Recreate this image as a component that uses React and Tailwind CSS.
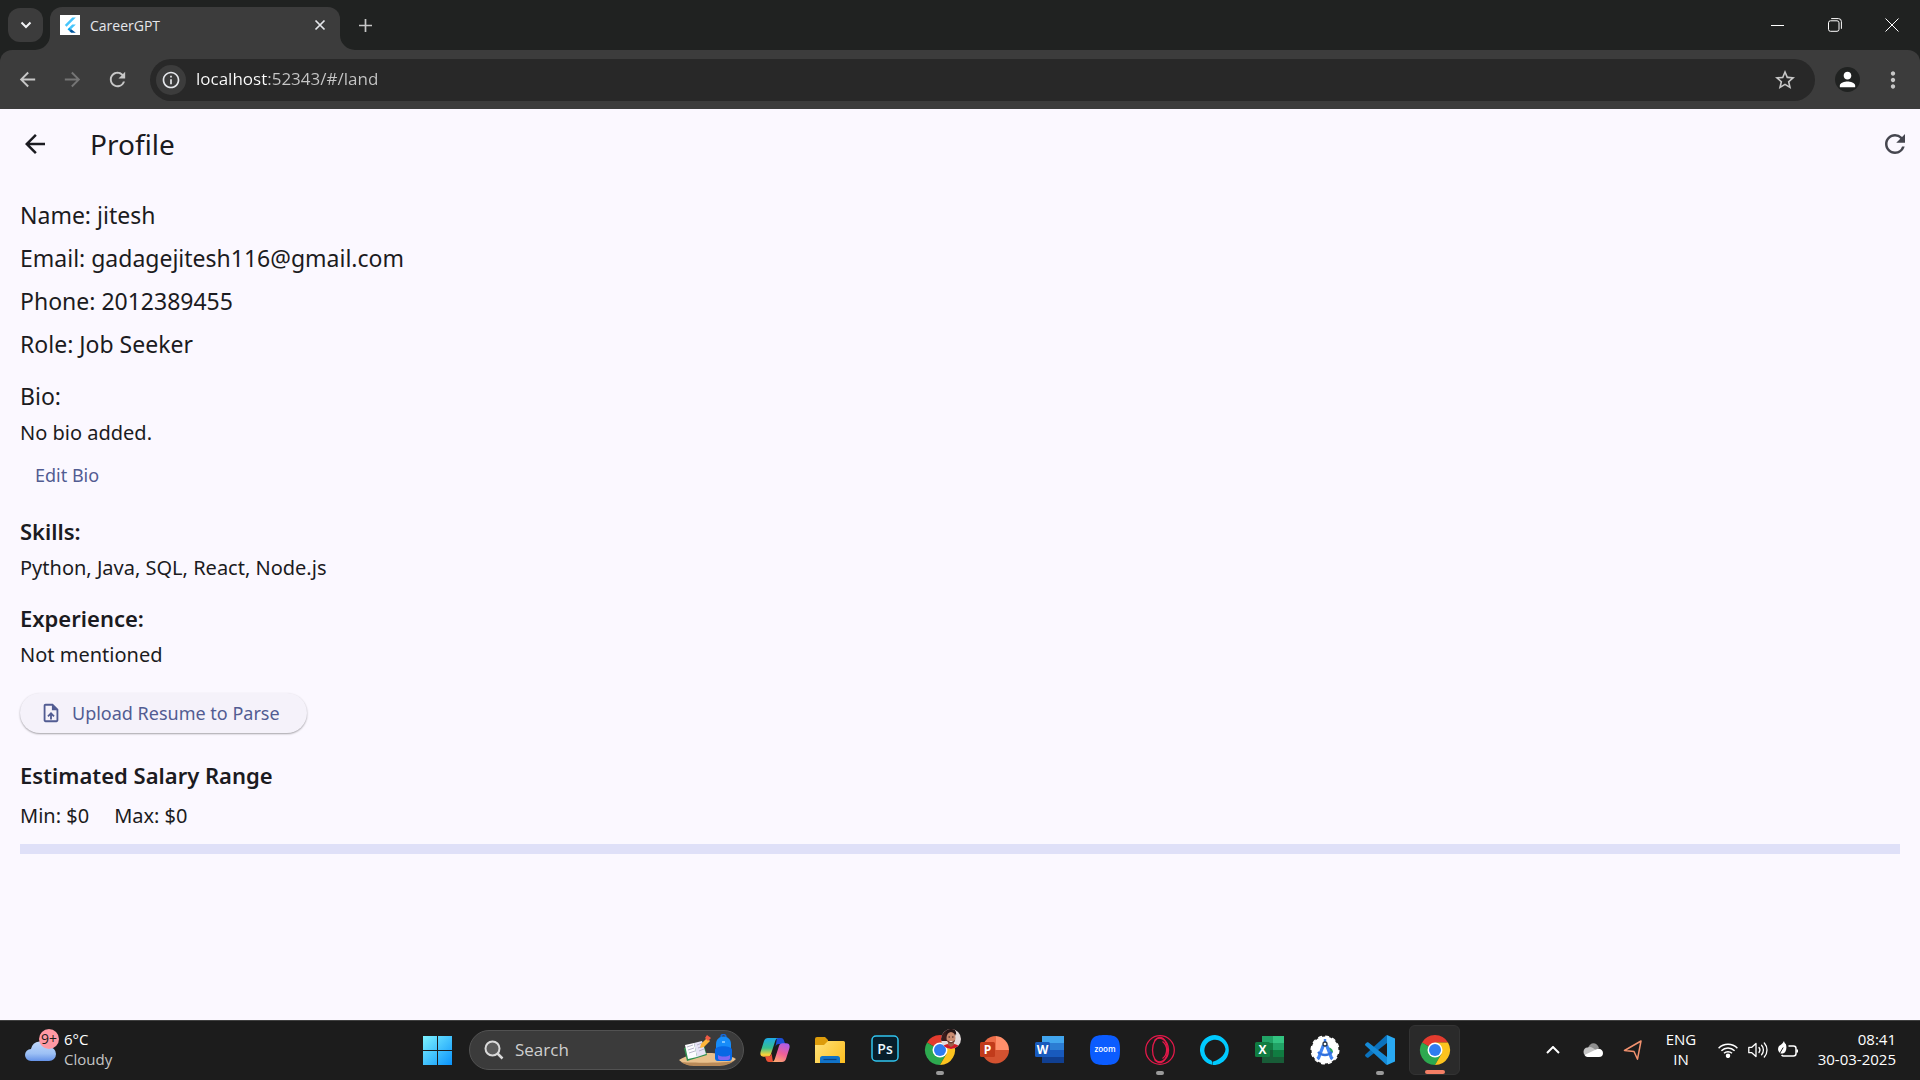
import { useState } from 'react';
import {
  MdArrowBack,
  MdArrowForward,
  MdInfoOutline,
  MdMoreVert,
  MdOutlineUploadFile,
  MdPerson,
  MdRefresh,
  MdStarBorder,
} from 'react-icons/md';

const profile = {
  name: 'jitesh',
  email: 'gadagejitesh116@gmail.com',
  phone: '2012389455',
  role: 'Job Seeker',
  bio: '',
  skills: ['Python', 'Java', 'SQL', 'React', 'Node.js'],
  experience: '',
  salary: { min: 0, max: 0, percent: 0 },
};

function FlutterIcon() {
  return (
    <svg viewBox="0 0 20 20" className="size-5 shrink-0 bg-white" aria-hidden="true">
      <path d="M12.3 2.5h3.5L6.6 11.8 4.8 10z" fill="#47c5fb" />
      <path d="M12.2 9.6h3.6L11 14.3 9.2 12.5z" fill="#47c5fb" />
      <path d="M7.5 14.2l1.8-1.8 1.9 1.9-1.8 1.8z" fill="#00a4f0" />
      <path d="M9.4 16.1l1.8-1.8 4.6 3.4h-4.7z" fill="#00569e" />
    </svg>
  );
}

function TitleBar() {
  return (
    <div className="flex h-[50px] items-start bg-[#202221]">
      <button aria-label="Search tabs" className="mt-2 ml-2 flex h-[34px] w-[35px] items-center justify-center rounded-xl bg-[#3c3c3c] text-gray-100">
        <svg viewBox="0 0 12 8" className="h-2 w-3" fill="none" stroke="currentColor" strokeWidth="2">
          <path d="M1.5 1.5L6 6l4.5-4.5" />
        </svg>
      </button>

      <div className="relative mt-[7px] ml-[7px] flex h-[43px] w-[290px] items-center rounded-t-xl bg-[#3c3c3c] pr-2 pb-[7px] pl-[10px]">
        <FlutterIcon />
        <span className="ml-[10px] flex-1 text-[14px] text-gray-200">CareerGPT</span>
        <button aria-label="Close tab" className="flex size-6 items-center justify-center text-gray-200">
          <svg viewBox="0 0 12 12" className="size-3" stroke="currentColor" strokeWidth="1.7">
            <path d="M1.5 1.5l9 9M10.5 1.5l-9 9" />
          </svg>
        </button>
        {/* flared corners under the tab */}
        <svg viewBox="0 0 15 15" className="absolute bottom-0 -left-[15px] size-[15px]" fill="#3c3c3c">
          <path d="M15 0v15H0A15 15 0 0 0 15 0z" />
        </svg>
        <svg viewBox="0 0 15 15" className="absolute -right-[15px] bottom-0 size-[15px]" fill="#3c3c3c">
          <path d="M0 0v15h15A15 15 0 0 1 0 0z" />
        </svg>
      </div>

      <button aria-label="New tab" className="ml-[9px] flex h-[50px] w-8 items-center justify-center text-[#c7c7c7]">
        <svg viewBox="0 0 13 13" className="size-[13px]" stroke="currentColor" strokeWidth="1.7">
          <path d="M6.5 0v13M0 6.5h13" />
        </svg>
      </button>

      <div className="ml-auto flex h-[50px] text-white">
        <button aria-label="Minimize" className="flex w-[57px] items-center justify-center">
          <svg viewBox="0 0 13 13" className="size-[13px]" stroke="currentColor">
            <path d="M0 6.5h13" />
          </svg>
        </button>
        <button aria-label="Restore" className="flex w-[57px] items-center justify-center">
          <svg viewBox="0 0 14 14" className="size-[14px]" fill="none" stroke="currentColor">
            <rect x="0.5" y="2.8" width="10.5" height="10.5" rx="2" />
            <path d="M3.2 0.6h7.2a3 3 0 0 1 3 3v7.2" />
          </svg>
        </button>
        <button aria-label="Close" className="flex w-[57px] items-center justify-center">
          <svg viewBox="0 0 14 14" className="size-[14px]" stroke="currentColor">
            <path d="M0.5 0.5l13 13M13.5 0.5l-13 13" />
          </svg>
        </button>
      </div>
    </div>
  );
}

function AddressBar() {
  const [url, setUrl] = useState('localhost:52343/#/land');

  return (
    <div className="bg-[#202221]">
      <div className="flex h-[59px] items-center rounded-t-xl bg-[#3c3c3c] px-[5px] text-[#c7c7c7]">
        <button aria-label="Back" className="flex w-[45px] justify-center"><MdArrowBack size={23} /></button>
        <button aria-label="Forward" className="flex w-[45px] justify-center text-[#757575]"><MdArrowForward size={23} /></button>
        <button aria-label="Reload" className="flex w-[45px] justify-center"><MdRefresh size={23} /></button>

        <div className="mx-[10px] flex h-[42px] flex-1 items-center rounded-full bg-[#282828] pr-[18px] pl-[6px]">
          <button aria-label="Site information" className="flex size-[30px] items-center justify-center rounded-full bg-[#3c3c3c] text-gray-200">
            <MdInfoOutline size={20} />
          </button>
          <input
            aria-label="Address"
            value={url}
            onChange={(e) => setUrl(e.target.value)}
            className="ml-[10px] min-w-0 flex-1 bg-[linear-gradient(to_right,#ffffff_72px,#c7c7c7_72px)] bg-clip-text pb-[2px] text-[17px] text-transparent outline-none"
          />
          <button aria-label="Bookmark this tab"><MdStarBorder size={24} /></button>
        </div>

        <button aria-label="Account" className="flex w-[45px] justify-center">
          <span className="flex size-[25px] items-center justify-center rounded-full bg-[#202221] text-white">
            <MdPerson size={23} />
          </span>
        </button>
        <button aria-label="Menu" className="flex w-[45px] justify-center"><MdMoreVert size={26} /></button>
      </div>
    </div>
  );
}

function ProfilePage() {
  return (
    <main className="flex-1 bg-[#fbf8ff] font-['Noto_Sans',sans-serif] text-[#1b1b21]">
      <header className="flex h-[70px] items-center pr-[10px] pl-5">
        <button aria-label="Back"><MdArrowBack size={30} /></button>
        <h1 className="ml-10 flex-1 text-[28px]">Profile</h1>
        <button aria-label="Refresh" className="text-[#45464f]"><MdRefresh size={30} /></button>
      </header>

      <div className="p-5">
        <div className="flex flex-col gap-[11px] text-[23px] leading-8">
          <p>Name: {profile.name}</p>
          <p>Email: {profile.email}</p>
          <p>Phone: {profile.phone}</p>
          <p>Role: {profile.role}</p>
        </div>

        <section className="mt-5">
          <h2 className="text-[23px] leading-8">Bio:</h2>
          <p className="mt-[6px] text-[20px] leading-[29px]">{profile.bio || 'No bio added.'}</p>
          <button className="mt-2 flex h-10 items-center px-[15px] text-[18px] text-[#525c92]">Edit Bio</button>
        </section>

        <section className="mt-5">
          <h2 className="text-[22px] leading-8 font-semibold">Skills:</h2>
          <p className="mt-[6px] text-[20px] leading-[29px]">{profile.skills.join(', ')}</p>
        </section>

        <section className="mt-5">
          <h2 className="text-[22px] leading-8 font-semibold">Experience:</h2>
          <p className="mt-[6px] text-[20px] leading-[29px]">{profile.experience || 'Not mentioned'}</p>
        </section>

        <button className="mt-6 flex h-10 items-center gap-[10px] rounded-full bg-[#f5f2fa] pr-[27px] pl-5 text-[18px] text-[#525c92] shadow-[0_1px_2px_rgba(0,0,0,0.35)]">
          <MdOutlineUploadFile size={22} />
          Upload Resume to Parse
        </button>

        <section className="mt-[26px]">
          <h2 className="text-[22px] leading-8 font-semibold">Estimated Salary Range</h2>
          <div className="mt-[10px] flex gap-[25px] text-[20px] leading-[29px]">
            <span>Min: ${profile.salary.min}</span>
            <span>Max: ${profile.salary.max}</span>
          </div>
          <div role="progressbar" aria-label="Salary range" aria-valuenow={profile.salary.percent} className="mt-[14px] h-[10px] bg-[#dfe0f8]">
            <div className="h-full bg-[#525c92]" style={{ width: `${profile.salary.percent}%` }} />
          </div>
        </section>
      </div>
    </main>
  );
}

function WindowsIcon() {
  return (
    <svg viewBox="0 0 29 29" className="size-[29px]">
      <defs>
        <linearGradient id="win" x1="0" y1="0" x2="29" y2="29" gradientUnits="userSpaceOnUse">
          <stop stopColor="#7df3ff" />
          <stop offset="1" stopColor="#0a93fb" />
        </linearGradient>
      </defs>
      <path d="M0 0h14v14H0zM15 0h14v14H15zM0 15h14v14H0zM15 15h14v14H15z" fill="url(#win)" />
    </svg>
  );
}

function SearchArt() {
  return (
    <svg viewBox="0 0 58 32" className="h-8 w-[58px]" aria-hidden="true">
      <path d="M0 26c8-5 18-7 29-7s21 2 28 6c-5 5-12 6-18 6H15C9 31 4 30 0 26z" fill="#e9c08c" />
      <path d="M2 28c8 1 48 1 53-1-5 4-11 5-16 5H15c-6 0-10-2-13-4z" fill="#b98a58" />
      <path d="M5 14l19-6 4 13-20 6z" fill="#2f8f4e" />
      <path d="M6 11l9-2 3 14-9 2z" fill="#fdfdff" />
      <path d="M15 9l8-2 4 13-9 3z" fill="#e6e3f5" />
      <path d="M8 13l6-2M9 16l6-2M10 19l6-2M18 11l5-2M19 14l5-2M20 17l5-2" stroke="#a7a4bd" strokeWidth="0.8" />
      <path d="M21 14l1-4 6-6 3 3-6 6z" fill="#ffb638" />
      <path d="M26 4l2-3 4 3-3 3z" fill="#ee5b45" />
      <path d="M42 3a2.500 2.500 0 0 1 5 0" fill="none" stroke="#1668d8" strokeWidth="1.600" />
      <path d="M37 10c0-10 15-10 15 0v14c0 2-1 3-3 3H40c-2 0-3-1-3-3z" fill="#168cf9" />
      <path d="M36 16c0-5 17-5 17 0v8c0 2-1 3-3 3H39c-2 0-3-1-3-3z" fill="#0868e4" />
      <path d="M39 21c3 2 9 2 12 0v3c0 1-1 2-2 2h-8c-1 0-2-1-2-2z" fill="#7e68f2" />
      <path d="M43 8h3" stroke="#9bd4ff" strokeWidth="1.500" />
    </svg>
  );
}

function CopilotIcon() {
  return (
    <svg viewBox="0 0 30 30" className="size-[30px]">
      <defs>
        <linearGradient id="copA" x1="8" y1="2" x2="8" y2="24" gradientUnits="userSpaceOnUse">
          <stop stopColor="#1aa7f0" />
          <stop offset=".5" stopColor="#37c08f" />
          <stop offset=".8" stopColor="#f4d33a" />
          <stop offset="1" stopColor="#f58b3c" />
        </linearGradient>
        <linearGradient id="copB" x1="24" y1="7" x2="15" y2="28" gradientUnits="userSpaceOnUse">
          <stop stopColor="#a65cf0" />
          <stop offset=".5" stopColor="#ef5f97" />
          <stop offset="1" stopColor="#ffb26b" />
        </linearGradient>
      </defs>
      <path d="M17 3h4c2 0 2.700 1.500 3.300 3.500l.9 2.500H19c-2 0-3 1-3.600 3z" fill="#1b4fd6" />
      <path d="M8 3h10c-1.500.3-2.300 1.500-2.800 3L11 19c-.7 2-1.800 2.800-3.600 2.800H4c-3 0-4.200-1.800-3.400-5L4 6c.7-2 2-3 4-3z" fill="url(#copA)" />
      <path d="M13 27H9c-2 0-2.700-1.500-3.200-3.200L5 21.500h3c2 0 3-1 3.600-3z" fill="#e95035" />
      <path d="M22 27H12c1.500-.3 2.300-1.500 2.800-3L19 11c.7-2 1.800-2.800 3.600-2.800H26c3 0 4.200 1.800 3.400 5L26 24c-.7 2-2 3-4 3z" fill="url(#copB)" />
    </svg>
  );
}

function FolderIcon() {
  return (
    <svg viewBox="0 0 30 30" className="size-[30px]">
      <defs>
        <linearGradient id="folder" x1="0" y1="6" x2="30" y2="28" gradientUnits="userSpaceOnUse">
          <stop stopColor="#ffe27a" />
          <stop offset="1" stopColor="#fdbe1f" />
        </linearGradient>
      </defs>
      <path d="M0 4a2 2 0 0 1 2-2h8l3 3v5H0z" fill="#dd9c0b" />
      <path d="M0 10h9l4-4h15.500A1.500 1.500 0 0 1 30 7.500V28H0z" fill="url(#folder)" />
      <path d="M5 28v-4.500A2.500 2.500 0 0 1 7.500 21h15a2.500 2.500 0 0 1 2.500 2.500V28z" fill="#1173c8" />
      <path d="M8.500 24.500h13" stroke="#0a4382" strokeWidth="1.200" />
    </svg>
  );
}

function PhotoshopIcon() {
  return (
    <svg viewBox="0 0 30 30" className="size-[30px]">
      <rect x="2" y="1" width="26" height="25" rx="4" fill="#071e2b" stroke="#31c5f0" strokeWidth="1.500" />
      <text x="15" y="18.500" textAnchor="middle" fontSize="14" fontWeight="600" fontFamily="Open Sans, sans-serif" fill="#e9f8ff">Ps</text>
    </svg>
  );
}

function ChromeIcon({ children }) {
  return (
    <svg viewBox="0 0 30 30" className="size-[30px] overflow-visible">
      <path d="M15 15L2 7.500A15 15 0 0 1 28 7.500H15z" fill="#e33b2e" />
      <path d="M15 15L2 7.500A15 15 0 0 0 15 30l6.500-11.200z" fill="#2da94f" />
      <path d="M15 15V7.500h13A15 15 0 0 1 15 30l6.500-11.200z" fill="#fcc31e" />
      <circle cx="15" cy="15" r="7.500" fill="#fff" />
      <circle cx="15" cy="15" r="6" fill="#2f7cf0" />
      {children}
    </svg>
  );
}

function ChromeProfileIcon() {
  return (
    <ChromeIcon>
      <clipPath id="face"><circle cx="26" cy="4" r="10" /></clipPath>
      <g clipPath="url(#face)">
        <path d="M16-6h20v20H16z" fill="#e4dada" />
        <path d="M16-6h14v12H16z" fill="#3a1b1c" />
        <path d="M17 14c1-5 5-5 9-5s8 0 9 5z" fill="#d11a26" />
        <path d="M23 6h6v4l-3 2-3-2z" fill="#9c604a" />
        <ellipse cx="26" cy="3" rx="4.500" ry="6" fill="#c98a70" />
        <path d="M21 1c-1-6 2-7 5-7s6 1 5 7c-1-3-2-4-5-4s-4 1-5 4z" fill="#231416" />
        <path d="M22 5c1 5 7 5 8 0-1 1-2 1-4 1s-3 0-4-1z" fill="#6a3d31" />
        <path d="M24.500 6.500h3" stroke="#f0dcd4" />
        <path d="M23.500 2h1.500M27 2h1.500" stroke="#30191a" />
      </g>
    </ChromeIcon>
  );
}

function PowerPointIcon() {
  return (
    <svg viewBox="0 0 30 30" className="size-[30px]">
      <path d="M16 1A14 14 0 0 0 2 15h14z" fill="#ed6c47" />
      <path d="M16 1a14 14 0 0 1 13 14H16z" fill="#ff8f6b" />
      <path d="M2 15a13.500 13.500 0 0 0 27 0z" fill="#d35230" />
      <rect x="0" y="7" width="15" height="15" rx="1.500" fill="#c13b1b" />
      <text x="7.500" y="19" textAnchor="middle" fontSize="12" fontWeight="700" fontFamily="Open Sans, sans-serif" fill="#fff">P</text>
    </svg>
  );
}

function WordIcon() {
  return (
    <svg viewBox="0 0 30 30" className="size-[30px]">
      <path d="M7 1h22v7H7z" fill="#41a5ee" />
      <path d="M7 8h22v7H7z" fill="#2b7cd3" />
      <path d="M7 15h22v7H7z" fill="#185abd" />
      <path d="M7 22h22v6H7z" fill="#103f91" />
      <rect x="0" y="7" width="15" height="15" rx="1.500" fill="#185abd" />
      <text x="7.500" y="19" textAnchor="middle" fontSize="12" fontWeight="700" fontFamily="Open Sans, sans-serif" fill="#fff">W</text>
    </svg>
  );
}

function ZoomIcon() {
  return (
    <svg viewBox="0 0 30 30" className="size-[30px]">
      <path d="M15 0c12 0 15 3 15 15s-3 15-15 15S0 27 0 15 3 0 15 0z" fill="#0b5cff" />
      <text x="15" y="17" textAnchor="middle" fontSize="8" fontWeight="600" fontFamily="Open Sans, sans-serif" fill="#fff">zoom</text>
    </svg>
  );
}

function OperaIcon() {
  return (
    <svg viewBox="0 0 30 30" className="size-[30px]" fill="none" stroke="#e3194a" strokeWidth="1.300">
      <circle cx="15" cy="15" r="14.300" />
      <ellipse cx="15" cy="15" rx="7.500" ry="12.500" />
      <path d="M9.500 5.500c4-5 14-1.500 14 9.500s-10 14.500-14 9.500" />
      <path d="M17.500 6.500c5.500 4 5.500 13 0 17" />
    </svg>
  );
}

function AlexaIcon() {
  return (
    <svg viewBox="0 0 30 30" className="size-[30px]">
      <path d="M15 0a15 15 0 0 0-3 29.700v-3c0-1-.6-1.500-1.500-1.800A10.600 10.600 0 1 1 25.500 14c0 7-9 12-13 12.700V30A15 15 0 1 0 15 0z" fill="#00caff" />
    </svg>
  );
}

function ExcelIcon() {
  return (
    <svg viewBox="0 0 30 30" className="size-[30px]">
      <path d="M7 1h11v14H7z" fill="#21a366" />
      <path d="M18 1h11v7H18z" fill="#33c481" />
      <path d="M18 8h11v7H18z" fill="#21a366" />
      <path d="M7 8h11v7H7z" fill="#107c41" />
      <path d="M18 15h11v7H18z" fill="#107c41" />
      <path d="M7 15h11v7h11v6H7z" fill="#185c37" />
      <rect x="0" y="7" width="15" height="15" rx="1.500" fill="#107c41" />
      <text x="7.500" y="19" textAnchor="middle" fontSize="12" fontWeight="700" fontFamily="Open Sans, sans-serif" fill="#fff">X</text>
    </svg>
  );
}

function AndroidStudioIcon() {
  return (
    <svg viewBox="0 0 30 30" className="size-[30px]">
      <circle cx="15" cy="15" r="13.500" fill="#fff" />
      <circle cx="15" cy="15" r="13.800" fill="none" stroke="#fff" strokeWidth="1.400" strokeDasharray="4 3.200" />
      <path d="M18 12.500c3 0 5 2 5 5h-5z" fill="#2ea55a" />
      <path d="M13.500 10L8.500 23l-1 1M16.500 10l5 13 1 1" stroke="#4285f4" strokeWidth="3.200" fill="none" />
      <path d="M8 17c4 4 10 4 14 0" stroke="#3070dd" strokeWidth="2.400" fill="none" />
      <path d="M13.800 4h2.400v3h-2.400z" fill="#4285f4" />
      <circle cx="15" cy="9" r="2" fill="#fff" stroke="#27364a" strokeWidth="1.300" />
    </svg>
  );
}

function VsCodeIcon() {
  return (
    <svg viewBox="0 0 30 30" className="size-[30px]">
      <path d="M22 0l8 3.500v23L22 30z" fill="#29a9f2" />
      <path d="M22 0v8L3.500 22.500c-.6.500-1.200.4-1.700 0L.4 21.200c-.5-.5-.5-1.300 0-1.800L21 .4z" fill="#0b72bd" />
      <path d="M22 30v-8L3.500 7.500c-.6-.5-1.200-.4-1.700 0L.4 8.800c-.5.5-.5 1.300 0 1.800L21 29.600z" fill="#168bd8" />
    </svg>
  );
}

const apps = [
  { name: 'Copilot', icon: CopilotIcon },
  { name: 'File Explorer', icon: FolderIcon },
  { name: 'Photoshop', icon: PhotoshopIcon },
  { name: 'Chrome (profile)', icon: ChromeProfileIcon, running: true },
  { name: 'PowerPoint', icon: PowerPointIcon },
  { name: 'Word', icon: WordIcon },
  { name: 'Zoom', icon: ZoomIcon },
  { name: 'Opera', icon: OperaIcon, running: true },
  { name: 'Alexa', icon: AlexaIcon },
  { name: 'Excel', icon: ExcelIcon },
  { name: 'Android Studio', icon: AndroidStudioIcon },
  { name: 'Visual Studio Code', icon: VsCodeIcon, running: true },
  { name: 'Chrome', icon: ChromeIcon, active: true },
];

function AppButton({ app }) {
  const Icon = app.icon;
  return (
    <button
      aria-label={app.name}
      className={`relative mx-[2px] flex h-[50px] w-[51px] items-center justify-center rounded-md ${app.active ? 'border border-[#333333] bg-[#2a2a2a]' : ''}`}
    >
      <Icon />
      {app.running && <span className="absolute bottom-0 h-1 w-2 rounded-full bg-[#9a9a9a]" />}
      {app.active && <span className="absolute bottom-0 h-1 w-5 rounded-full bg-[#f47f65]" />}
    </button>
  );
}

function Taskbar() {
  return (
    <footer className="flex h-[60px] items-center border-t border-[#404040] bg-[#1c1c1c] pb-px text-[15px] leading-5 text-white">
      <div className="w-[410px]">
        <button className="flex items-start pb-[3px] pl-[25px] text-left">
          <svg viewBox="0 0 36 34" className="h-[34px] w-9" aria-hidden="true">
            <defs>
              <linearGradient id="cloud" x1="0" y1="12" x2="0" y2="33" gradientUnits="userSpaceOnUse">
                <stop stopColor="#c3dafb" />
                <stop offset=".6" stopColor="#9cc0f5" />
                <stop offset="1" stopColor="#5d8ce6" />
              </linearGradient>
            </defs>
            <path d="M6 32a6 6 0 0 1 0-12 9.500 9.500 0 0 1 18-2 7 7 0 0 1 0 14z" fill="url(#cloud)" />
            <circle cx="24" cy="10" r="10" fill="#ff99a4" />
            <text x="24" y="15" textAnchor="middle" fontSize="14" fontFamily="Open Sans, sans-serif" fill="#1c1c1c">9+</text>
          </svg>
          <span className="ml-[3px]">
            <span className="block">6°C</span>
            <span className="block text-[#c5c5c5]">Cloudy</span>
          </span>
        </button>
      </div>

      <div className="flex items-center">
        <button aria-label="Start" className="flex w-[55px] justify-center"><WindowsIcon /></button>
        <div className="ml-1 flex h-10 w-[275px] items-center rounded-full border border-[#525252] bg-[#3b3b3b] pr-[6px] pl-[14px]">
          <svg viewBox="0 0 20 20" className="size-5 shrink-0" fill="none" stroke="#dadada" strokeWidth="2">
            <circle cx="8.500" cy="8.500" r="7" fill="#5b5b5b" />
            <path d="M13.500 13.500l5 5" strokeWidth="2.500" />
          </svg>
          <input type="search" aria-label="Search" placeholder="Search" className="ml-[11px] w-0 flex-1 text-[17px] outline-none placeholder:text-[#cfcfcf]" />
          <SearchArt />
        </div>
        <div className="ml-[3px] flex">
          {apps.map(app => <AppButton key={app.name} app={app} />)}
        </div>
      </div>

      <div className="ml-auto flex items-center pr-6">
        <button aria-label="Show hidden icons" className="flex w-10 justify-center">
          <svg viewBox="0 0 14 8" className="h-2 w-[14px]" fill="none" stroke="currentColor" strokeWidth="2">
            <path d="M1 7l6-6 6 6" />
          </svg>
        </button>
        <button aria-label="OneDrive" className="flex w-10 justify-center">
          <svg viewBox="0 0 20 14" className="h-[14px] w-5">
            <path d="M5 5.500C6-1 14-2 16 5l-5 4z" fill="#8e8e8e" />
            <path d="M4.500 4.500C8 3 10 5 13 7l-5 6H4A4.300 4.300 0 0 1 4.500 4.500z" fill="#c4c4c4" />
            <path d="M1.500 12L13 6.500c3-2 7 0 7 3.500a4 4 0 0 1-4 4H4.500c-1.200 0-2.200-.7-3-2z" fill="#fff" />
          </svg>
        </button>
        <button aria-label="Location" className="flex w-10 justify-center">
          <svg viewBox="0 0 20 20" className="size-5" fill="none" stroke="#f3926f" strokeWidth="1.500" strokeLinejoin="round">
            <path d="M18 1L1.500 10.500 11 11.500 14.500 19.200z" />
          </svg>
        </button>
        <button className="w-14 pb-[3px] text-center">ENG<br />IN</button>
        <button aria-label="Network, volume and battery" className="ml-1 flex items-center">
          <span className="flex w-[30px] justify-center">
            <svg viewBox="0 0 20 16" className="h-4 w-5" fill="none" stroke="currentColor" strokeWidth="1.500">
              <path d="M.6 6.200a13.200 13.200 0 0 1 18.800 0M3.400 8.800a9.300 9.300 0 0 1 13.200 0M6 11.300a5.700 5.700 0 0 1 8 0" />
              <circle cx="10" cy="13.800" r="1.500" fill="currentColor" />
            </svg>
          </span>
          <span className="flex w-[30px] justify-center">
            <svg viewBox="0 0 20 16" className="h-4 w-5" fill="none" stroke="currentColor" strokeWidth="1.300">
              <path d="M.8 5.300h3L8 1.500v13l-4.200-3.800h-3zM11 5.500c1.200 1.500 1.200 3.500 0 5M13.600 3.300c2.400 2.600 2.400 6.800 0 9.400M16.300 1c3.600 4 3.600 10 0 14" strokeLinejoin="round" strokeLinecap="round" />
            </svg>
          </span>
          <span className="flex w-[30px] justify-center">
            <svg viewBox="0 0 20 18" className="h-[18px] w-5" fill="none" stroke="currentColor" strokeWidth="1.500">
              <path d="M10.500 5h5A2.500 2.500 0 0 1 18 7.500v5a2.500 2.500 0 0 1-2.500 2.500h-10A2.500 2.500 0 0 1 3.600 14" />
              <path d="M19.200 8.500v3" strokeWidth="1.800" />
              <path d="M6 0c.3 1.500.8 2.300 1.800 3 .9 2.800.9 5.500-.6 8-1.600 1.800-3.700 1.900-5 1.200C-.6 10-.3 7 1 5c1.500-1 3.500-2 5-5z" fill="currentColor" stroke="none" />
              <path d="M5.200 6.500L.8 14" stroke="#1c1c1c" strokeWidth="1" />
            </svg>
          </span>
        </button>
        <button className="w-[93px] pb-[3px] text-right">08:41<br />30-03-2025</button>
      </div>
    </footer>
  );
}

function App() {
  return (
    <div className="flex min-h-screen flex-col font-['Open_Sans','Noto_Sans',sans-serif]">
      <TitleBar />
      <AddressBar />
      <ProfilePage />
      <Taskbar />
    </div>
  );
}

export default App;
